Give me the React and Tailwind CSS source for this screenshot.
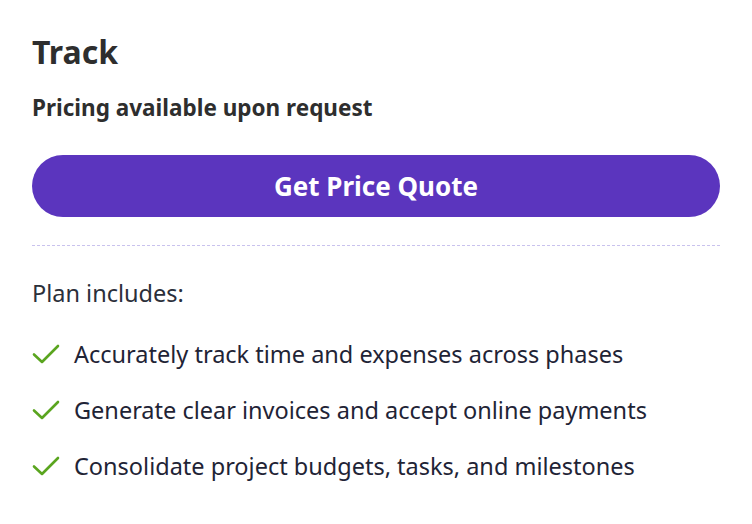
import React from "react";

const features = [
  "Accurately track time and expenses across phases",
  "Generate clear invoices and accept online payments",
  "Consolidate project budgets, tasks, and milestones",
];

function Check() {
  return (
    <svg width="28" height="22" viewBox="0 0 28 22" fill="none" className="shrink-0">
      <path d="M2 11.5 L10 19 L26 3" stroke="#5aa51f" strokeWidth="2.6" strokeLinecap="round" strokeLinejoin="round" />
    </svg>
  );
}

export default function App() {
  return (
    <div className="w-[752px] h-[524px] bg-white px-8 pt-[30px]" style={{ fontFamily: "'Noto Sans', Lato, sans-serif" }}>
      <h1 className="text-[32px] leading-[44px] font-bold text-[#2e2e2e]">Track</h1>
      <p className="mt-[20px] text-[22.5px] leading-[28px] font-bold text-[#2e2e2e]">Pricing available upon request</p>

      {/* Quote button */}
      <button className="mt-[33px] w-full h-[62px] rounded-full bg-[#5b35be] text-white text-[26px] font-bold">
        Get Price Quote
      </button>

      <div className="mt-[28px] border-t border-dashed border-[#c9c2ee]" />

      <p className="mt-[33px] text-[23.5px] leading-[28px] text-[#2b2f3a]">Plan includes:</p>

      <ul className="mt-[33px] flex flex-col gap-[28px]">
        {features.map((f) => (
          <li key={f} className="flex items-center gap-[14px] text-[23.5px] leading-[28px] text-[#1f2436]">
            <Check />
            <span>{f}</span>
          </li>
        ))}
      </ul>
    </div>
  );
}
